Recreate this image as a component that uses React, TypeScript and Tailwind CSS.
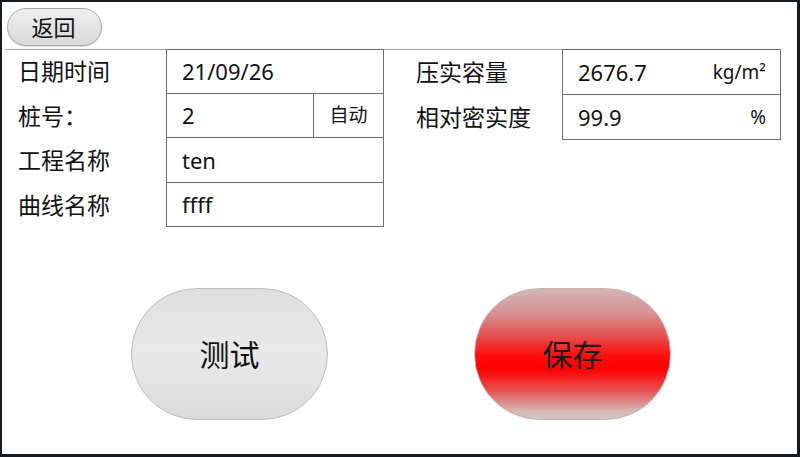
import React from "react";

const cjk = "font-['Noto_Sans','Noto_Sans_CJK_SC',sans-serif]";

function Cell({
  value,
  unit,
  first,
  height,
  width,
}: {
  value: string;
  unit?: string;
  first?: boolean;
  height: string;
  width: string;
}) {
  return (
    <div
      className={`${width} ${height} ${first ? "border" : "border-x border-b"} border-[#6e6e6e] flex items-center justify-between pl-[15px] pr-[14px]`}
    >
      <span className="text-[22px] text-[#111]">{value}</span>
      {unit && <span className="text-[19px] text-[#111]">{unit}</span>}
    </div>
  );
}

function Label({ text, width }: { text: string; width: string }) {
  return <div className={`${width} text-[23px] text-[#111] flex items-center`}>{text}</div>;
}

export default function App() {
  return (
    <div
      className={`w-[800px] h-[457px] bg-white border-t-2 border-l-2 border-r-[3px] border-b-[3px] border-[#141922] overflow-hidden ${cjk}`}
    >
      {/* top bar with back button */}
      <div className="h-[47px] pt-[6px] pl-[5px]">
        <button className="w-[95px] h-[38px] rounded-full border border-[#a9a9a9] bg-[linear-gradient(to_bottom,#efefef,#e2e2e2_60%,#d9d9d9)] shadow-[0_1px_1px_rgba(0,0,0,0.15)] text-[22px] text-[#111] flex items-center justify-center pr-[2px]">
          返回
        </button>
      </div>
      <div className="ml-[3px] w-[560px] h-px bg-[#a0a4a0]" />

      {/* form */}
      <div className="-mt-px flex items-start">
        <div className="pl-[16px] flex flex-col">
          <div className="flex">
            <Label text="日期时间" width="w-[148px]" />
            <Cell value="21/09/26" first height="h-[45px]" width="w-[218px]" />
          </div>
          <div className="flex">
            <Label text="桩号：" width="w-[148px]" />
            <div className="w-[147px] h-[44px] border-l border-b border-[#6e6e6e] flex items-center pl-[15px] text-[22px] text-[#111]">
              2
            </div>
            <div className="w-[71px] h-[44px] border-x border-b border-[#6e6e6e] flex items-center justify-center text-[19px] text-[#111]">
              自动
            </div>
          </div>
          <div className="flex">
            <Label text="工程名称" width="w-[148px]" />
            <Cell value="ten" height="h-[45px]" width="w-[218px]" />
          </div>
          <div className="flex">
            <Label text="曲线名称" width="w-[148px]" />
            <Cell value="ffff" height="h-[44px]" width="w-[218px]" />
          </div>
        </div>

        <div className="ml-[32px] flex flex-col">
          <div className="flex">
            <Label text="压实容量" width="w-[146px]" />
            <Cell value="2676.7" unit="kg/m²" first height="h-[46px]" width="w-[219px]" />
          </div>
          <div className="flex">
            <Label text="相对密实度" width="w-[146px]" />
            <Cell value="99.9" unit="%" height="h-[45px]" width="w-[219px]" />
          </div>
        </div>
      </div>

      {/* action buttons */}
      <div className="mt-[61px] pl-[129px] flex gap-[146px]">
        <button className="w-[197px] h-[132px] rounded-full border border-[#bdbdbd] bg-[linear-gradient(to_bottom,#dedede,#e9e9e9_45%,#e4e4e4_70%,#dadada)] text-[30px] text-[#111] flex items-center justify-center">
          测试
        </button>
        <button className="w-[197px] h-[132px] rounded-full border border-[#c8b0b0] bg-[linear-gradient(to_bottom,#d4b4b4_0%,#d89494_18%,#e65050_36%,#ff0a0a_52%,#ff0000_62%,#e65252_78%,#d6b6b6_94%,#d4c4c4_100%)] text-[30px] text-[#1a1a1a] flex items-center justify-center">
          保存
        </button>
      </div>
    </div>
  );
}
